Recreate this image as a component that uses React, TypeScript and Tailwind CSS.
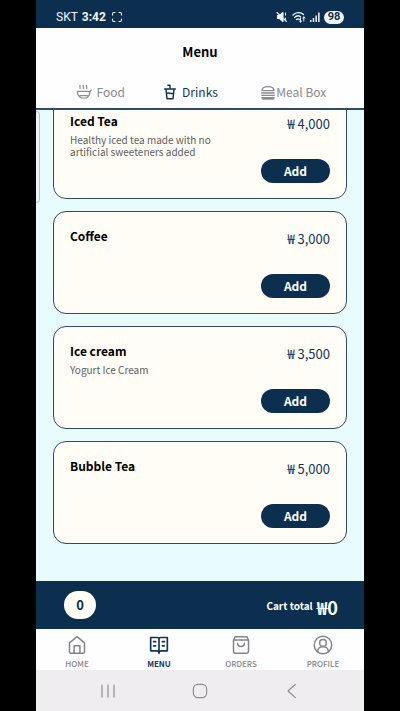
import React from "react";

type Item = { name: string; description?: string; price: string };

const items: Item[] = [
  {
    name: "Iced Tea",
    description: "Healthy iced tea made with no artificial sweeteners added",
    price: "4,000",
  },
  { name: "Coffee", price: "3,000" },
  { name: "Ice cream", description: "Yogurt Ice Cream", price: "3,500" },
  { name: "Bubble Tea", price: "5,000" },
];

function Icon({ className, width = 1.5, children }: { className: string; width?: number; children: React.ReactNode }) {
  return (
    <svg
      viewBox="0 0 24 24"
      fill="none"
      stroke="currentColor"
      strokeWidth={width}
      strokeLinecap="round"
      strokeLinejoin="round"
      className={className}
      aria-hidden="true"
    >
      {children}
    </svg>
  );
}

function StatusBar() {
  return (
    <div className="flex h-7 shrink-0 items-center justify-between bg-[#0c2f50] pt-[6px] pr-5 pl-5 font-['Roboto',sans-serif] text-xs text-slate-100">
      <div className="flex items-center gap-1">
        <span>SKT</span>
        <span className="font-bold">3:42</span>
        <Icon className="ml-px size-3" width={2.2}>
          <path d="M8 3H6a3 3 0 0 0-3 3v2M16 3h2a3 3 0 0 1 3 3v2M8 21H6a3 3 0 0 1-3-3v-2M16 21h2a3 3 0 0 0 3-3v-2" />
        </Icon>
      </div>
      <div className="flex items-center gap-1">
        <Icon className="size-3" width={2.2}>
          <path d="M3 9v6h4l7 6V3L7 9z" fill="currentColor" />
          <path d="M2 3l19 18M19 4v4M19 14v2" />
        </Icon>
        <svg
          viewBox="0 0 14 12"
          className="h-3 w-[14px]"
          fill="none"
          stroke="currentColor"
          strokeWidth="1.3"
          strokeLinecap="round"
          aria-hidden="true"
        >
          <path d="M1 4c3-3 8-3 10.500-.5M2.500 6.500c2-2 4.500-2 6-.8M4.500 8.500c1-.8 2-.8 2.800-.2" />
          <path d="M8.500 7v4M7.500 10l1 1.200 1-1.200M11.800 10V6M10.800 7l1-1.200 1 1.200" strokeWidth="1" />
        </svg>
        <svg viewBox="0 0 10 12" className="h-3 w-[10px]" fill="currentColor" aria-hidden="true">
          <path d="M0 9h1.500v2H0zM2.700 7h1.500v4H2.700zM5.400 4.500h1.500V11H5.400zM8.100 1.500h1.500V11H8.100z" />
        </svg>
        <span className="flex h-[13px] w-5 items-center justify-center rounded-full bg-slate-100 text-[11px] font-bold text-[#0c2f50]">
          98
        </span>
      </div>
    </div>
  );
}

function Tabs() {
  return (
    <nav className="grid grid-cols-3 pb-2 text-xs leading-4">
      <button className="flex items-center justify-center gap-1 pl-5 text-[#8b8b8b]">
        <Icon className="size-4" width={1.8}>
          <path d="M2 11h19c0 5-2 8-5 10H8c-4-2-6-5-6-10M6 17.500h11M20 13l3-4" />
          <path d="M6 2c-1 2 1 3 0 5M11 2c-1 2 1 3 0 5M16 2c-1 2 1 3 0 5" />
        </Icon>
        Food
      </button>
      <button className="flex items-center justify-center gap-1 pr-5 text-[#12365a]" aria-current="page">
        <Icon className="size-4" width={2.2}>
          <path d="M4 7.500h16M6 8l1.500 14h9L18 8M12 7V2H9M7.500 14c3-1.500 6 1.500 9.500 0" />
        </Icon>
        Drinks
      </button>
      <button className="flex items-center justify-center pr-8 text-[#8b8b8b]">
        <Icon className="size-4" width={2}>
          <path d="M3 10c0-4 4-6 9-6s9 2 9 6zM2.500 13.500h19M2.500 17h19M3 20.500h18v.5c0 1-1 1.500-2 1.500H5c-1 0-2-.5-2-1.500z" />
        </Icon>
        Meal Box
      </button>
    </nav>
  );
}

function Card({ item }: { item: Item }) {
  return (
    <li className="flex h-[103px] shrink-0 justify-between rounded-[13px] border border-[#2d4b68] bg-[#fffdf5] px-4 py-[15px]">
      <div className="w-[152px]">
        <h2 className="text-xs leading-[18px] font-bold text-black">{item.name}</h2>
        {item.description && <p className="mt-1 text-[10px] leading-3 text-[#606060]">{item.description}</p>}
      </div>
      <div className="flex flex-col items-end justify-between">
        <span className="text-[13px] leading-6 text-[#12365a]">₩ {item.price}</span>
        <button className="h-6 w-[69px] rounded-full bg-[#0c2f50] text-xs leading-6 font-bold text-white">
          Add
        </button>
      </div>
    </li>
  );
}

const navItems = [
  { label: "HOME", art: <path d="M3 9.500 12 2l9 7.500V20a2 2 0 0 1-2 2H5a2 2 0 0 1-2-2zM8.500 22v-9h7v9" /> },
  {
    label: "MENU",
    art: (
      <path d="M12 5c0-1.500-1-2-2-2H2v16h7.500c1.500 0 2.500 1 2.500 2.500 0-1.500 1-2.500 2.500-2.500H22V3h-8c-1 0-2 .5-2 2zv17M5.500 8H8M5.500 13H8M16 8h2.500M16 13h2.500" />
    ),
  },
  {
    label: "ORDERS",
    art: (
      <path d="M5 2h14l2 4v13.500a2.500 2.500 0 0 1-2.500 2.500h-13A2.500 2.500 0 0 1 3 19.500V6zM3 6h18M8 10c0 5 8 5 8 0" />
    ),
  },
  {
    label: "PROFILE",
    art: (
      <>
        <circle cx="12" cy="12" r="10.500" />
        <circle cx="12" cy="9.500" r="4" />
        <path d="M5.500 20c0-8 13-8 13 0" />
      </>
    ),
  },
];

export default function App() {
  return (
    <div className="h-screen bg-black px-[9%] font-['Noto_Sans_CJK_KR',sans-serif]">
      <div className="flex h-full flex-col overflow-hidden">
        <StatusBar />
        <header className="flex h-[82px] shrink-0 flex-col justify-between border-b-2 border-[#2d4b68] bg-[#fefdff]">
          <h1 className="pt-[14px] text-center text-[13px] leading-5 font-bold text-black">Menu</h1>
          <Tabs />
        </header>

        <main className="relative flex min-h-0 flex-1 flex-col justify-end overflow-hidden bg-[#e8fcfe] px-[17px] pb-[37px]">
          <div className="absolute top-px left-0 h-[92px] w-1 rounded-r border border-l-0 border-[#b9c2c4] bg-[#eef7f8]" />
          <ul className="flex flex-col gap-3">
            {items.map((item) => (
              <Card key={item.name} item={item} />
            ))}
          </ul>
        </main>

        <section className="flex h-12 shrink-0 items-center justify-between bg-[#0c2f50] pr-[26px] pl-7 text-white">
          <span className="flex h-7 w-8 items-center justify-center rounded-full bg-[#fffdf5] text-[13px] font-bold text-[#0c2f50]">
            0
          </span>
          <div className="flex items-center gap-1">
            <span className="text-[10px] font-bold">Cart total</span>
            <span className="pt-1 text-lg leading-6 font-bold">₩0</span>
          </div>
        </section>

        <nav className="grid h-[41px] shrink-0 grid-cols-4 bg-[#fefdff] text-[8px] leading-[10px]">
          {navItems.map(({ label, art }) => (
            <button
              key={label}
              className={
                label === "MENU"
                  ? "flex flex-col items-center gap-1 pt-[6px] font-bold text-[#12365a]"
                  : "flex flex-col items-center gap-1 pt-[6px] font-medium text-[#858585]"
              }
            >
              <Icon className="size-5 shrink-0" width={label === "MENU" ? 2 : 1.8}>
                {art}
              </Icon>
              {label}
            </button>
          ))}
        </nav>

        <div className="flex h-[41px] shrink-0 items-center justify-between bg-[#efedf0] px-16 text-[#8c8a8d]">
          <button aria-label="Recent apps">
            <Icon className="size-4" width={1.7}>
              <path d="M3 3v18M12 3v18M21 3v18" />
            </Icon>
          </button>
          <button aria-label="Home">
            <Icon className="size-4" width={1.7}>
              <rect x="2" y="2" width="20" height="20" rx="7" />
            </Icon>
          </button>
          <button aria-label="Back">
            <Icon className="size-4" width={1.7}>
              <path d="M17 2 6 12l11 10" />
            </Icon>
          </button>
        </div>
      </div>
    </div>
  );
}
